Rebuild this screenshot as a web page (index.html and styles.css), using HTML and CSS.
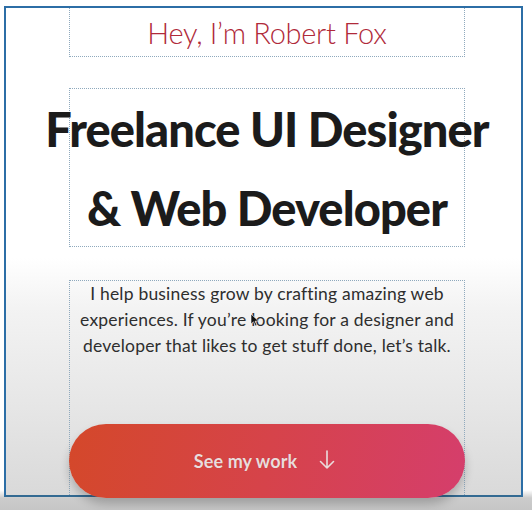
FILE: index.html
```html
<!DOCTYPE html>
<html>
<head>
<meta charset="utf-8">
<link rel="stylesheet" href="styles.css">
</head>
<body>
<div class="frame">
  <div class="box box-greeting">
    <h2 class="greeting">Hey, I’m Robert Fox</h2>
  </div>
  <div class="box box-title">
    <h1 class="title">Freelance UI Designer<br>&amp; Web Developer</h1>
  </div>
  <div class="box box-intro">
    <p class="intro">I help business grow by crafting amazing web experiences. If you’re looking for a designer and developer that likes to get stuff done, let’s talk.</p>
    <a class="cta" href="#">
      <span class="cta-label">See my work</span>
      <svg class="cta-arrow" width="16" height="20" viewBox="0 0 16 20"><path d="M8 1 V18 M1.5 11.5 L8 18 L14.5 11.5" fill="none" stroke="currentColor" stroke-width="1.6" stroke-linecap="round" stroke-linejoin="round"/></svg>
    </a>
  </div>
  <svg class="cursor" width="10" height="14" viewBox="0 0 10 14"><path d="M1 1 L1 11 L3.5 8.8 L5.5 13 L7 12.3 L5.1 8.2 L8.5 8 Z" fill="#111" stroke="#fff" stroke-width="0.6"/></svg>
</div>
</body>
</html>
```

FILE: styles.css
```css
html, body {
  margin: 0;
  padding: 0;
}
body {
  width: 532px;
  height: 510px;
  overflow: hidden;
  background: linear-gradient(to bottom, #ffffff 0px, #ffffff 490px, #cccccc 498px, #c6c6c6 510px);
  font-family: "Lato", "Liberation Sans", sans-serif;
}
.frame {
  position: relative;
  box-sizing: border-box;
  margin: 6px 0 0 4px;
  width: 519px;
  height: 491px;
  border: 2px solid #2c6ea6;
  border-bottom-color: #336a92;
  display: flex;
  flex-direction: column;
  align-items: flex-start;
  padding-left: 63px;
  background: linear-gradient(to bottom, #ffffff 0px, #ffffff 250px, #f3f3f3 300px, #e6e6e6 400px, #d9d9d9 489px);
}
.box {
  box-sizing: border-box;
  width: 396px;
  border: 1px dotted #8fa9bd;
}
.box-greeting {
  height: 49px;
  border-top: none;
  display: flex;
  justify-content: center;
}
.greeting {
  margin: 5px 0 0;
  font-weight: 300;
  font-size: 29px;
  line-height: 40px;
  color: #b02a3a;
  letter-spacing: -0.3px;
}
.box-title {
  margin-top: 31px;
  height: 159px;
  display: flex;
  justify-content: center;
}
.title {
  margin: 1px 0 0;
  white-space: nowrap;
  text-align: center;
  font-family: "Lato", sans-serif;
  font-weight: 900;
  font-size: 47px;
  line-height: 79px;
  letter-spacing: -0.9px;
  color: #1b1b1b;
}
.box-intro {
  margin-top: 33px;
  flex: 1;
  border-bottom: none;
  display: flex;
  flex-direction: column;
  align-items: center;
}
.intro {
  margin: 0;
  padding-top: 0;
  width: 392px;
  text-align: center;
  font-size: 17.5px;
  line-height: 26px;
  letter-spacing: 0.2px;
  color: #2e2e2e;
}
.cta {
  margin-top: auto;
  margin-left: -1px;
  margin-bottom: -3px;
  width: 396px;
  height: 74px;
  flex: none;
  border-radius: 37px;
  background: linear-gradient(100deg, #d4482a 0%, #d6434a 50%, #d53e6c 100%);
  box-shadow: 0 6px 10px rgba(0, 0, 0, 0.22);
  display: flex;
  align-items: center;
  justify-content: center;
  gap: 22px;
  text-decoration: none;
  color: #eadcdc;
  position: relative;
  z-index: 1;
  box-sizing: border-box;
  padding-right: 4px;
}
.cta-label {
  font-weight: 700;
  font-size: 18px;
  letter-spacing: 0.1px;
  text-shadow: 0 0 1px rgba(0,0,0,0.15);
}
.cta-arrow {
  margin-top: -2px;
}
.cursor {
  position: absolute;
  left: 244px;
  top: 305px;
}
```
